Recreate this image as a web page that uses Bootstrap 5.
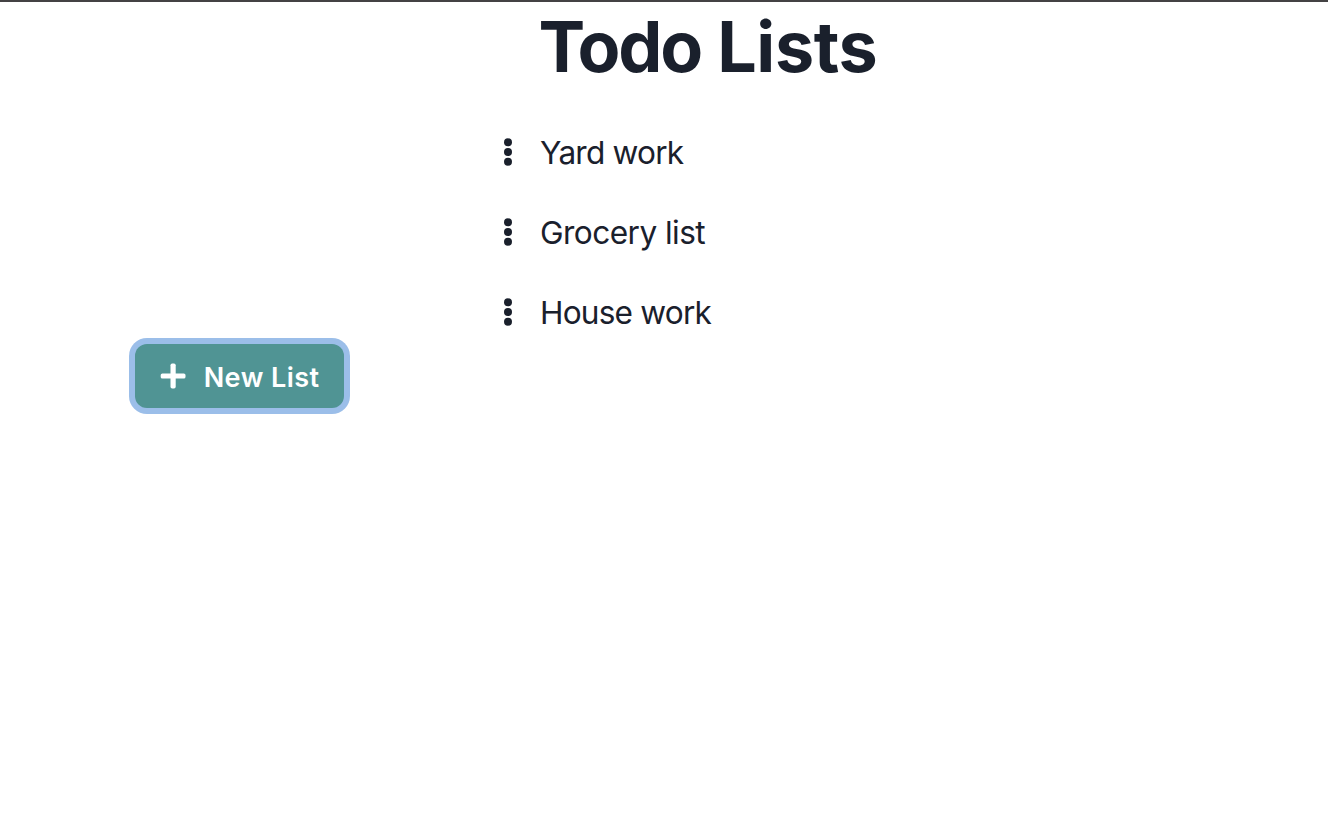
<!DOCTYPE html>
<html lang="en">
<head>
<meta charset="utf-8">
<meta name="viewport" content="width=device-width, initial-scale=1">
<title>Todo Lists</title>
<link href="https://cdn.jsdelivr.net/npm/bootstrap@5.3.0/dist/css/bootstrap.min.css" rel="stylesheet">
<style>
body{font-family:Inter,sans-serif;color:#1a202c;background:#fff}
.page{height:830px;border-top:2px solid #444244;overflow:hidden}
.side{width:500px;padding:342px 0 0 135px}
.new-list{width:209px;height:64px;border:0;border-radius:12px;background:#509494;color:#fff;font-size:27px;font-weight:600;letter-spacing:.45px;line-height:1;box-shadow:0 0 0 6px #9bbee9;padding:0 24.5px 0 25px}
.new-list span{padding-top:2px}
.title{font-size:70px;font-weight:700;line-height:90px;letter-spacing:-.4px;padding-left:38.5px;margin:0 0 20px;white-space:nowrap}
.title .tight{letter-spacing:-2.2px}
.todo{height:80px;font-size:31.6px;line-height:80px;letter-spacing:-.8px}
.todo span{padding-top:2px}
.todo .loose{letter-spacing:-.55px}
.dots{width:16px;height:32px;margin-right:24px}
</style>
</head>
<body>
<div class="page d-flex align-items-start">
<aside class="side flex-shrink-0">
<button class="new-list btn d-flex align-items-center justify-content-between" type="button">
<svg width="26" height="26" viewBox="0 0 26 26" fill="#fff"><rect x=".7" y="10.4" width="24.8" height="5.2" rx="1.7"/><rect x="10.5" y=".6" width="5.2" height="24.8" rx="1.7"/></svg>
<span class="text-nowrap">New List</span>
</button>
</aside>
<main>
<h1 class="title"><span class="tight">Todo</span> Lists</h1>
<ul class="list-unstyled m-0">
<li class="todo d-flex align-items-center"><svg class="dots" viewBox="0 0 16 32" fill="#1a202c"><circle cx="8" cy="6.3" r="4"/><circle cx="8" cy="16" r="4"/><circle cx="8" cy="25.7" r="4"/></svg><span>Yard work</span></li>
<li class="todo d-flex align-items-center"><svg class="dots" viewBox="0 0 16 32" fill="#1a202c"><circle cx="8" cy="6.3" r="4"/><circle cx="8" cy="16" r="4"/><circle cx="8" cy="25.7" r="4"/></svg><span class="loose">Grocery list</span></li>
<li class="todo d-flex align-items-center"><svg class="dots" viewBox="0 0 16 32" fill="#1a202c"><circle cx="8" cy="6.3" r="4"/><circle cx="8" cy="16" r="4"/><circle cx="8" cy="25.7" r="4"/></svg><span>House work</span></li>
</ul>
</main>
</div>
<script src="https://cdn.jsdelivr.net/npm/bootstrap@5.3.0/dist/js/bootstrap.bundle.min.js"></script>
</body>
</html>
